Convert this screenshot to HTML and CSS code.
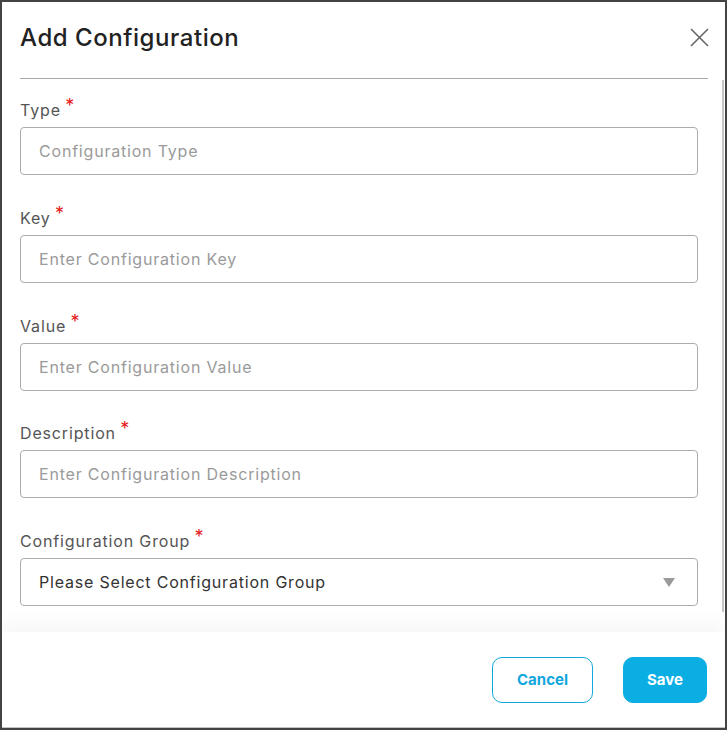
FILE: index.html
```html
<!DOCTYPE html>
<html lang="en">
<head>
<meta charset="utf-8">
<title>Add Configuration</title>
<link rel="stylesheet" href="styles.css">
</head>
<body>
<div class="dialog">
  <header class="dialog-header">
    <h1 class="dialog-title">Add Configuration</h1>
    <button class="close-btn" aria-label="Close">
      <svg width="19" height="19" viewBox="0 0 19 19"><path d="M1 1L18 18M18 1L1 18" stroke="#666" stroke-width="1.6" fill="none"/></svg>
    </button>
  </header>
  <div class="divider"></div>
  <div class="dialog-body">
    <div class="field">
      <label class="field-label">Type <span class="req">*</span></label>
      <input class="field-input" type="text" placeholder="Configuration Type">
    </div>
    <div class="field">
      <label class="field-label">Key <span class="req">*</span></label>
      <input class="field-input" type="text" placeholder="Enter Configuration Key">
    </div>
    <div class="field">
      <label class="field-label">Value <span class="req">*</span></label>
      <input class="field-input" type="text" placeholder="Enter Configuration Value">
    </div>
    <div class="field">
      <label class="field-label">Description <span class="req">*</span></label>
      <input class="field-input" type="text" placeholder="Enter Configuration Description">
    </div>
    <div class="field">
      <label class="field-label">Configuration Group <span class="req">*</span></label>
      <div class="field-select">
        <span>Please Select Configuration Group</span>
        <span class="caret"></span>
      </div>
    </div>
    <div class="scroll-thumb"></div>
  </div>
  <footer class="dialog-footer">
    <button class="btn btn-outline">Cancel</button>
    <button class="btn btn-primary">Save</button>
  </footer>
</div>
</body>
</html>
```
FILE: styles.css
```css
* { box-sizing: border-box; }
html, body { margin: 0; padding: 0; background: #fff; }
body { font-family: "Inter", "Open Sans", sans-serif; }

.dialog {
  width: 727px;
  height: 730px;
  border: 2px solid #434343;
  background: #fff;
  display: flex;
  flex-direction: column;
  overflow: hidden;
}

.dialog-header {
  height: 76px;
  display: flex;
  align-items: center;
  justify-content: space-between;
  padding: 0 16px 5px 18px;
}
.dialog-title {
  margin: 0;
  font-size: 24px;
  font-weight: 500;
  color: #222;
  letter-spacing: 0.55px;
}
.close-btn {
  border: 0;
  background: none;
  padding: 0;
  width: 19px;
  height: 19px;
  cursor: pointer;
  display: flex;
}

.divider {
  height: 1px;
  background: #a9a9a9;
  margin: 0 17px 0 18px;
}

.dialog-body {
  position: relative;
  flex: 1;
  padding: 19px 27px 0 18px;
  display: flex;
  flex-direction: column;
  gap: 30.8px;
}
.scroll-thumb {
  position: absolute;
  right: 1px;
  top: 1px;
  width: 2px;
  height: 532px;
  background: #c6c6c6;
}

.field { display: flex; flex-direction: column; gap: 5px; }
.field-label {
  font-size: 16px;
  line-height: 24px;
  color: #555;
  letter-spacing: 0.85px;
}
.req { color: #e42020; font-size: 18px; position: relative; top: -4px; margin-left: -1px; }

.field-input, .field-select {
  height: 48px;
  border: 1px solid #acacac;
  border-radius: 4px;
  padding: 0 18px;
  font-family: inherit;
  font-size: 16px;
  letter-spacing: 0.8px;
  color: #333;
  outline: none;
  width: 100%;
}
.field-input::placeholder { color: #9a9a9a; }
.field-select {
  display: flex;
  align-items: center;
  justify-content: space-between;
  color: #333;
  padding-right: 22px;
}
.caret {
  width: 0; height: 0;
  border-left: 6px solid transparent;
  border-right: 6px solid transparent;
  border-top: 9px solid #9a9a9a;
}

.dialog-footer {
  height: 96px;
  flex: none;
  display: flex;
  align-items: center;
  justify-content: flex-end;
  gap: 30px;
  padding: 0 18px 0 18px;
  background: #fff;
  border-bottom: 1px solid #c4c4c4;
  box-shadow: 0 -10px 18px rgba(0,0,0,0.035);
  position: relative;
}
.btn {
  height: 46px;
  border-radius: 10px;
  font-family: inherit;
  font-size: 15px;
  font-weight: 700;
  cursor: pointer;
}
.btn-outline {
  width: 101px;
  background: #fff;
  color: #12a7dd;
  border: 1px solid #12a7dd;
}
.btn-primary {
  width: 84px;
  background: #0aaee3;
  color: #fff;
  border: 1px solid #0aaee3;
}
```
